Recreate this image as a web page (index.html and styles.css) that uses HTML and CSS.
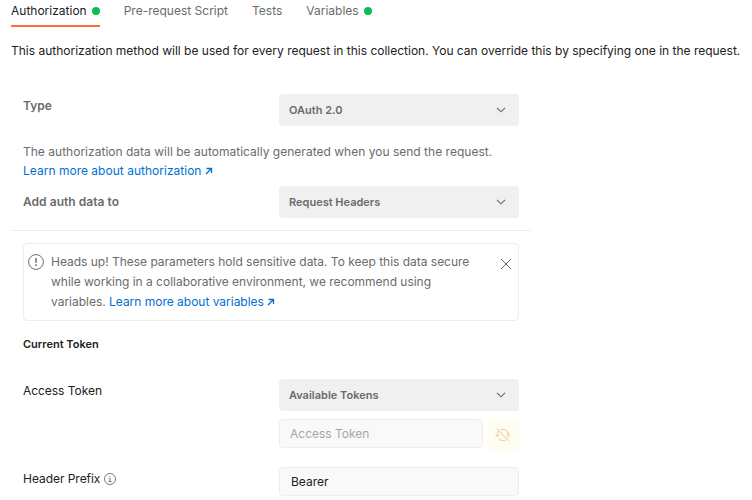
FILE: index.html
```html
<!DOCTYPE html>
<html lang="en">
<head>
<meta charset="utf-8">
<title>Authorization</title>
<link rel="stylesheet" href="styles.css">
</head>
<body>
<nav class="tabs">
  <a class="tab active">Authorization<span class="dot"></span></a>
  <a class="tab">Pre-request Script</a>
  <a class="tab">Tests</a>
  <a class="tab">Variables<span class="dot"></span></a>
</nav>
<p class="intro">This authorization method will be used for every request in this collection. You can override this by specifying one in the request.</p>
<main class="panel">
  <section class="method">
    <div class="row">
      <span class="label strong">Type</span>
      <div class="select">OAuth 2.0<svg class="chevron" viewBox="0 0 10 6"><path d="M1 .8l4 4 4-4"/></svg></div>
    </div>
    <p class="hint">The authorization data will be automatically generated when you send the request.<br><a class="link">Learn more about authorization <svg class="arrow" viewBox="0 0 8 8"><path d="M1.5 1.5H6.5v4.5M6.5 1.5L1 7"/></svg></a></p>
    <div class="row">
      <span class="label strong centered">Add auth data to</span>
      <div class="select">Request Headers<svg class="chevron" viewBox="0 0 10 6"><path d="M1 .8l4 4 4-4"/></svg></div>
    </div>
  </section>
  <section class="token">
    <div class="alert">
      <svg class="warn" viewBox="0 0 16 16"><circle cx="8" cy="8" r="7.4"/><path class="bar" d="M8 4v4.8M8 10.3v1.7"/></svg>
      <p class="message">Heads up! These parameters hold sensitive data. To keep this data secure while working in a collaborative environment, we recommend using variables. <a class="link">Learn more about variables <svg class="arrow" viewBox="0 0 8 8"><path d="M1.5 1.5H6.5v4.5M6.5 1.5L1 7"/></svg></a></p>
      <svg class="close" viewBox="0 0 12 12"><path d="M1 1l10 10M11 1L1 11"/></svg>
    </div>
    <h2 class="heading">Current Token</h2>
    <div class="row access">
      <span class="label">Access Token</span>
      <div class="controls">
        <div class="select">Available Tokens<svg class="chevron" viewBox="0 0 10 6"><path d="M1 .8l4 4 4-4"/></svg></div>
        <div class="field-line">
          <div class="field placeholder">Access Token</div>
          <div class="sync"><svg viewBox="0 0 16 14"><path d="M2.3 8.2V6.5c0-1.3.6-2.5 1.5-3.4M.4 6.5l1.9 1.9 1.9-1.9M5.8 1.9C8.8.7 13.3 2 13.3 6.8M11.4 7.4l1.9-1.9 1.9 1.9M13.2 7.5c0 .9-.2 1.7-.6 2.4M10.6 12c-2.3 1.1-5.3.6-6.9-1.4M2 .8l11.6 12"/></svg></div>
        </div>
      </div>
    </div>
    <div class="row prefix">
      <span class="label">Header Prefix<svg class="info" viewBox="0 0 12 12"><circle cx="6" cy="6" r="5.5"/><path d="M4.6 5.2H6v3.3M4.4 8.6h3.2M5.5 3.4h1"/></svg></span>
      <div class="field">Bearer</div>
    </div>
  </section>
</main>
</body>
</html>
```
FILE: styles.css
```css
* { box-sizing: border-box; }
body {
  margin: 0;
  padding-left: 11px;
  background: #fff;
  color: #212121;
  font: 12px/20px Inter, "Liberation Sans", sans-serif;
  overflow: hidden;
}
p, h2 { margin: 0; }
svg { fill: none; stroke: currentColor; flex: none; }
.tabs { display: flex; gap: 24px; height: 27px; color: #6b6b6b; }
.tab { display: flex; align-items: center; height: 27px; padding-bottom: 5px; }
.tab.active { color: #212121; border-bottom: 2px solid #ff6c37; padding-bottom: 3px; }
.dot { width: 8px; height: 8px; margin-left: 5px; border-radius: 50%; background: #0cbb52; }
.intro { margin-top: 14px; white-space: nowrap; letter-spacing: -.007px; }
.panel { width: 520px; padding-top: 33px; }
.method { height: 137px; padding-left: 12px; border-bottom: 1px solid #ededed; }
.row { display: flex; width: 496px; height: 32px; }
.label { display: flex; align-items: center; width: 256px; height: 24px; letter-spacing: -.04px; }
.strong { color: #6b6b6b; font-weight: 600; letter-spacing: .04px; }
.centered { height: 32px; }
.select {
  display: flex;
  align-items: center;
  justify-content: space-between;
  width: 240px;
  height: 32px;
  padding: 0 13px 0 10px;
  border-radius: 4px;
  background: #f0f0f0;
  color: #6b6b6b;
  font-size: 11px;
  font-weight: 600;
}
.chevron { width: 10px; height: 6px; stroke-width: 1.15; }
.hint { height: 60px; padding-top: 16px; color: #6b6b6b; line-height: 19px; letter-spacing: .015px; }
.link { color: #0070d2; }
.arrow { width: 8px; height: 8px; stroke-width: 1.3; }
.token { padding: 12px 0 0 12px; }
.alert {
  display: flex;
  width: 496px;
  height: 78px;
  padding: 8px 6px 0 4px;
  border: 1px solid #ededed;
  border-radius: 4px;
  color: #6b6b6b;
}
.warn { width: 16px; height: 16px; margin-top: 2px; }
.bar { stroke-width: 1.5; }
.message { width: 430px; margin-left: 7px; letter-spacing: -.015px; }
.close { width: 12px; height: 12px; margin: 6px 0 0 auto; }
.heading { margin-top: 13px; font-size: 11px; line-height: 20px; font-weight: 600; }
.access { height: 69px; margin-top: 25px; }
.controls { width: 240px; }
.field-line { display: flex; justify-content: space-between; margin-top: 8px; }
.field {
  width: 240px;
  height: 29px;
  padding: 0 11px;
  border: 1px solid #ededed;
  border-radius: 4px;
  background: #f9f9f9;
  line-height: 27px;
}
.placeholder { width: 204px; padding: 0 10px; color: #a6a6a6; }
.sync {
  display: grid;
  place-items: center;
  width: 32px;
  height: 32px;
  border-radius: 4px;
  background: #fffcf0;
  color: #e5c79c;
}
.sync svg { width: 16px; height: 14px; }
.prefix { margin-top: 19px; }
.info { width: 12px; height: 12px; margin-left: 4px; color: #6b6b6b; stroke-width: .9; }
```
